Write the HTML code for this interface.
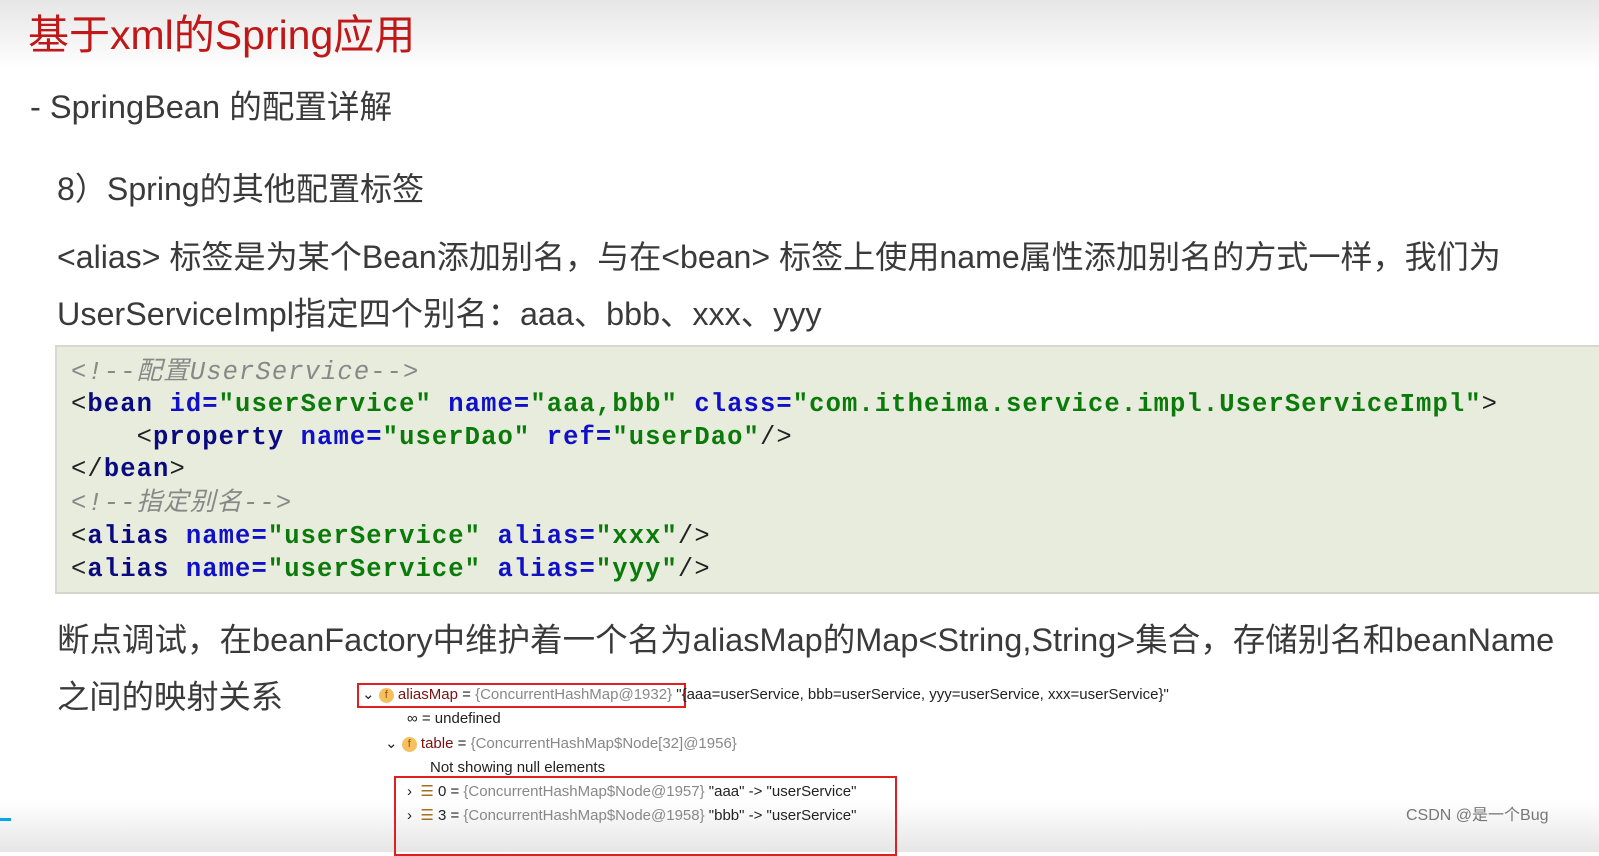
<!DOCTYPE html>
<html><head><meta charset="utf-8"><style>
*{margin:0;padding:0;box-sizing:border-box}
body{width:1599px;height:852px;overflow:hidden;background:#fff;position:relative;font-family:"Liberation Sans","Noto Sans CJK SC",sans-serif;color:#3a3a3a}
.top{position:absolute;left:0;top:0;width:1599px;height:70px;background:linear-gradient(#e6e6e6,#fff)}
.bot{position:absolute;left:0;top:800px;width:1599px;height:52px;background:linear-gradient(#fff,#e6e6e6)}
.t{position:absolute;white-space:nowrap;line-height:1}
.code{position:absolute;left:55px;top:345px;width:1560px;height:249px;background:#e8ecdc;border-top:2px solid #d8d8d0;border-left:2px solid #d8d8d0;border-bottom:2px solid #d4d6cc}
.cl{position:absolute;left:71px;font-family:"Liberation Mono","Noto Sans CJK SC",monospace;font-size:25.5px;line-height:33px;height:33px;letter-spacing:1.1px;white-space:pre;color:#222}
.k{color:#0a0a80;font-weight:bold}
.a{color:#1010c8;font-weight:bold}
.s{color:#0a7a0a;font-weight:bold}
.c{color:#888;font-style:italic}
.dbg{position:absolute;font-size:15px;line-height:18px;white-space:nowrap;color:#222}
.g{color:#888}
.fi{display:inline-block;width:15px;height:15px;border-radius:50%;background:#f5c060;color:#a05000;font-size:11px;text-align:center;line-height:15px;vertical-align:middle}
.box{position:absolute;border:2px solid #e02020}
</style></head><body>
<div class="top"></div><div class="bot"></div>
<div style="position:absolute;left:0;top:818px;width:11px;height:3px;background:#00a8e8"></div>
<div class="t" style="left:28px;top:15px;font-size:41px;color:#c01818">基于xml的Spring应用</div>
<div class="t" style="left:30px;top:91px;font-size:32.6px">- SpringBean 的配置详解</div>
<div class="t" style="left:57px;top:173px;font-size:32.1px">8）Spring的其他配置标签</div>
<div class="t" style="left:57px;top:241px;font-size:32.1px">&lt;alias&gt; 标签是为某个Bean添加别名，与在&lt;bean&gt; 标签上使用name属性添加别名的方式一样，我们为</div>
<div class="t" style="left:57px;top:298px;font-size:32.3px">UserServiceImpl指定四个别名：aaa、bbb、xxx、yyy</div>
<div class="code"></div>
<div class="cl c" style="top:356px">&lt;!--配置UserService--&gt;</div>
<div class="cl" style="top:388px">&lt;<span class="k">bean</span> <span class="a">id=</span><span class="s">"userService"</span> <span class="a">name=</span><span class="s">"aaa,bbb"</span> <span class="a">class=</span><span class="s">"com.itheima.service.impl.UserServiceImpl"</span>&gt;</div>
<div class="cl" style="top:421px">    &lt;<span class="k">property</span> <span class="a">name=</span><span class="s">"userDao"</span> <span class="a">ref=</span><span class="s">"userDao"</span>/&gt;</div>
<div class="cl" style="top:453px">&lt;/<span class="k">bean</span>&gt;</div>
<div class="cl c" style="top:487px">&lt;!--指定别名--&gt;</div>
<div class="cl" style="top:520px">&lt;<span class="k">alias</span> <span class="a">name=</span><span class="s">"userService"</span> <span class="a">alias=</span><span class="s">"xxx"</span>/&gt;</div>
<div class="cl" style="top:553px">&lt;<span class="k">alias</span> <span class="a">name=</span><span class="s">"userService"</span> <span class="a">alias=</span><span class="s">"yyy"</span>/&gt;</div>
<div class="t" style="left:57px;top:624px;font-size:32.5px">断点调试，在beanFactory中维护着一个名为aliasMap的Map&lt;String,String&gt;集合，存储别名和beanName</div>
<div class="t" style="left:57px;top:681px;font-size:32.3px">之间的映射关系</div>
<div class="box" style="left:357px;top:683px;width:329px;height:25px"></div>
<div class="dbg" style="left:362px;top:686px">⌄ <span class="fi">f</span> <span style="color:#7a1010">aliasMap</span> = <span class="g">{ConcurrentHashMap@1932}</span> "{aaa=userService, bbb=userService, yyy=userService, xxx=userService}"</div>
<div class="dbg" style="left:407px;top:710px">∞ = undefined</div>
<div class="dbg" style="left:385px;top:735px">⌄ <span class="fi">f</span> <span style="color:#7a1010">table</span> = <span class="g">{ConcurrentHashMap$Node[32]@1956}</span></div>
<div class="dbg" style="left:430px;top:759px">Not showing null elements</div>
<div class="box" style="left:394px;top:776px;width:503px;height:80px"></div>
<div class="dbg" style="left:407px;top:783px">›&nbsp; <span style="color:#a07020">☰</span> 0 = <span class="g">{ConcurrentHashMap$Node@1957}</span> "aaa" -&gt; "userService"</div>
<div class="dbg" style="left:407px;top:807px">›&nbsp; <span style="color:#a07020">☰</span> 3 = <span class="g">{ConcurrentHashMap$Node@1958}</span> "bbb" -&gt; "userService"</div>
<div class="t" style="left:1406px;top:808px;font-size:16px;color:#777">CSDN @是一个Bug</div>
</body></html>
